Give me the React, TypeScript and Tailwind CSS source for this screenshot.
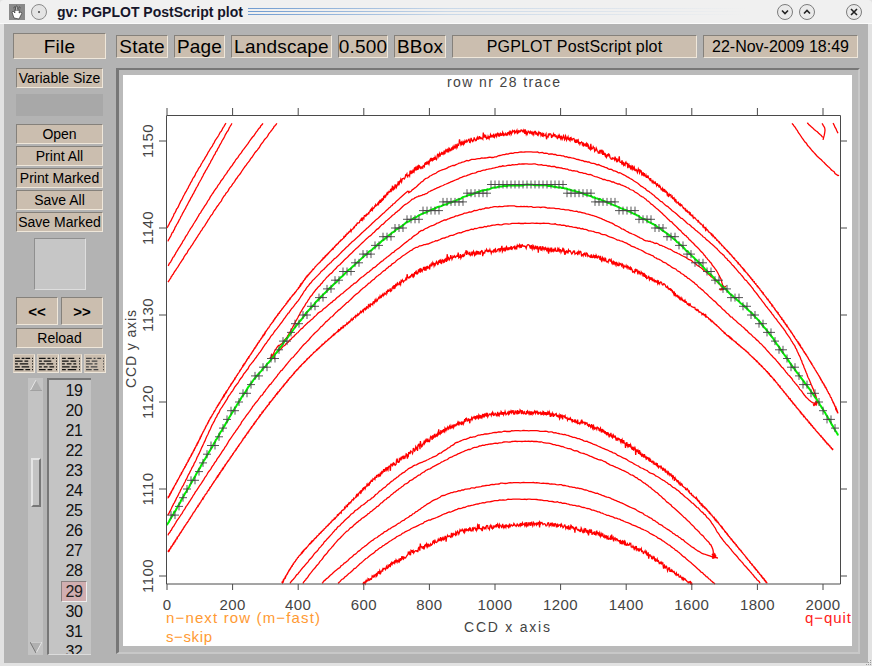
import React from 'react';

type Pt = [number, number];

// all plot coordinates are page pixels, the svg viewBox starts at the white area's corner
const curves: { pts: Pt[]; noise: number }[] = [
  // upper order
  { noise: 1.3, pts: [[168, 498], [193, 452], [217, 407], [267, 330], [297, 290], [320, 262], [400, 182], [427, 163], [463, 143], [497, 135], [520, 132], [547, 135], [573, 140], [600, 152], [640, 172], [675, 200], [717, 240], [750, 277], [777, 312], [803, 350], [827, 390], [838, 413]] },
  { noise: 0, pts: [[168, 515], [195, 462], [222, 407], [267, 342], [297, 302], [320, 273], [400, 198], [410, 192], [427, 178], [447, 168], [470, 160], [493, 157], [513, 153], [533, 152], [557, 155], [580, 160], [607, 168], [640, 185], [707, 240], [737, 270], [767, 307], [793, 343], [808, 377], [817, 400], [813, 405]] },
  { noise: 0, pts: [[272, 357], [277, 347], [287, 337], [320, 285], [400, 209], [427, 193], [460, 178], [493, 168], [527, 164], [560, 168], [600, 178], [640, 195], [690, 240], [710, 262], [720, 277], [723, 288]] },
  { noise: 0, pts: [[272, 357], [285, 345], [320, 312], [400, 247], [433, 225], [487, 208], [533, 207], [567, 210], [600, 218], [640, 238], [660, 245], [690, 260], [713, 278], [723, 288]] },
  { noise: 0, pts: [[168, 535], [210, 470], [258, 400], [320, 328], [400, 258], [433, 242], [483, 227], [533, 223], [573, 227], [613, 238], [660, 260], [693, 282], [727, 313], [760, 343], [787, 373], [807, 398], [817, 405]] },
  { noise: 1.3, pts: [[168, 552], [222, 470], [272, 400], [320, 347], [400, 283], [452, 258], [500, 250], [530, 247], [600, 258], [660, 283], [680, 298], [707, 317], [727, 335], [747, 352], [770, 375], [793, 403], [813, 427], [833, 450]] },
  // wrapped order, top left
  { noise: 0, pts: [[167, 228], [195, 175], [226, 123]] },
  { noise: 0, pts: [[168, 241], [198, 185], [232, 123]] },
  { noise: 0, pts: [[168, 266], [215, 190], [263, 123]] },
  { noise: 0, pts: [[168, 282], [225, 195], [277, 123]] },
  // top right bits
  { noise: 0, pts: [[792, 123], [810, 148], [835, 173], [839, 175]] },
  { noise: 0, pts: [[807, 123], [823, 137]] },
  { noise: 0, pts: [[822, 123], [825, 130], [823, 140]] },
  { noise: 0, pts: [[833, 123], [838, 133]] },
  // lower order
  { noise: 1.3, pts: [[282, 583], [300, 555], [340, 513], [373, 480], [407, 455], [440, 433], [473, 418], [507, 413], [540, 413], [573, 420], [607, 433], [640, 453], [673, 477], [707, 510], [732, 540], [767, 583]] },
  { noise: 0, pts: [[290, 583], [340, 525], [373, 497], [407, 470], [437, 455], [463, 440], [500, 432], [540, 431], [573, 437], [607, 450], [640, 467], [673, 487], [707, 517], [723, 540], [760, 583]] },
  { noise: 0, pts: [[303, 583], [340, 538], [373, 510], [407, 483], [440, 463], [473, 448], [507, 442], [540, 442], [573, 450], [607, 463], [640, 480], [673, 507], [700, 533], [712, 547], [713, 557]] },
  { noise: 0, pts: [[322, 583], [340, 567], [373, 540], [407, 518], [440, 497], [473, 488], [507, 483], [540, 483], [573, 487], [607, 497], [640, 512], [673, 533], [700, 552], [718, 558]] },
  { noise: 0, pts: [[338, 583], [380, 548], [423, 523], [473, 505], [523, 499], [573, 505], [607, 515], [640, 528], [673, 548], [715, 584]] },
  { noise: 1.3, pts: [[363, 584], [407, 555], [457, 533], [490, 527], [540, 524], [573, 528], [607, 537], [640, 550], [673, 572], [692, 584]] },
];

// the small tangles where the inner traces end
const knots: Pt[] = [[272, 357], [723, 288], [816, 404], [713, 556]];

const green: Pt[] = [[167, 525], [240, 400], [273, 357], [320, 298], [400, 227], [457, 200], [493, 188], [523, 185], [557, 187], [593, 197], [640, 217], [675, 240], [723, 287], [760, 322], [793, 367], [817, 400], [838, 435]];

let seed = 1234;
function rnd() {
  seed = (seed * 16807) % 2147483647;
  return seed / 2147483647 - 0.5;
}

function clamp01(v: number) {
  return Math.max(0, Math.min(1, v));
}

function sample(pts: Pt[], density = 1): Pt[] {
  const out: Pt[] = [];
  for (let i = 0; i < pts.length - 1; i++) {
    const p0 = pts[Math.max(0, i - 1)];
    const p1 = pts[i];
    const p2 = pts[i + 1];
    const p3 = pts[Math.min(pts.length - 1, i + 2)];
    const n = Math.max(2, Math.round(Math.hypot(p2[0] - p1[0], p2[1] - p1[1]) * density));
    for (let k = 0; k < n; k++) {
      const t = k / n;
      const f = (a: number, b: number, c: number, d: number) =>
        0.5 * (2 * b + (c - a) * t + (2 * a - 5 * b + 4 * c - d) * t * t + (3 * b - a - 3 * c + d) * t * t * t);
      out.push([f(p0[0], p1[0], p2[0], p3[0]), f(p0[1], p1[1], p2[1], p3[1])]);
    }
  }
  out.push(pts[pts.length - 1]);
  return out;
}

function toPath(pts: Pt[], noise: number) {
  return sample(pts, noise > 0 ? 2 : 0.6)
    .map(([x, y], i) => {
      const amp = noise * clamp01((x - 330) / 70) * clamp01((720 - x) / 80);
      const spike = Math.abs(rnd()) > 0.48 ? 2.6 : 1;
      const base = Math.round(y * 1.5) / 1.5;
      const jy = base + rnd() * (0.4 + amp * 3 * spike);
      return `${i === 0 ? 'M' : 'L'}${x.toFixed(1)} ${jy.toFixed(1)}`;
    })
    .join('');
}

function knotPath([cx, cy]: Pt) {
  let d = `M${cx} ${cy}`;
  for (let i = 0; i < 10; i++) d += `L${(cx + rnd() * 6).toFixed(1)} ${(cy + rnd() * 5).toFixed(1)}`;
  return d;
}

const greenPts = sample(green);
function greenY(x: number) {
  let best = greenPts[0];
  for (const p of greenPts) if (Math.abs(p[0] - x) < Math.abs(best[0] - x)) best = p;
  return best[1];
}

const marks: Pt[] = [];
for (let x = 171; x < 838; x += 4) {
  const row = Math.round((576 - greenY(x)) / 8.7);
  marks.push([x, 576 - row * 8.7]);
}

const xTicks = [0, 200, 400, 600, 800, 1000, 1200, 1400, 1600, 1800, 2000];
const yTicks = [1100, 1110, 1120, 1130, 1140, 1150];
const tx = (v: number) => 167 + (v / 200) * 65.6;
const ty = (v: number) => 576 - (v - 1100) * 8.7;
const plotFont = '"Liberation Sans", sans-serif';

function Plot() {
  return (
    <svg width="729" height="571" viewBox="123 75 729 571" className="block overflow-visible bg-white">
      <g fill="none" stroke="#ff0000" strokeWidth="1.3">
        {curves.map((c, i) => (
          <path key={i} d={toPath(c.pts, c.noise)} />
        ))}
        {knots.map((k, i) => (
          <path key={i} d={knotPath(k)} />
        ))}
      </g>
      <path d={toPath(green, 0)} fill="none" stroke="#00f000" strokeWidth="2" />
      <g stroke="#444444" strokeWidth="0.9">
        {marks.map(([x, y], i) => (
          <path key={i} d={`M${x - 4} ${y}H${x + 4}M${x} ${y - 4}V${y + 4}`} fill="none" />
        ))}
      </g>
      <g stroke="#4a4a4a" strokeWidth="1" fill="none">
        <path d="M166.5 115.5H840.5V584H166.5Z" />
        {xTicks.map((v) => (
          <path key={v} d={`M${tx(v)} 584V590M${tx(v)} 115V108`} />
        ))}
        {yTicks.map((v) => (
          <path key={v} d={`M166 ${ty(v)}H159M841 ${ty(v)}H847`} />
        ))}
      </g>
      <g fill="#444444" fontSize="15" fontFamily={plotFont} letterSpacing="0.4">
        {xTicks.map((v) => (
          <text key={v} x={tx(v)} y="610" textAnchor="middle">
            {v}
          </text>
        ))}
        {yTicks.map((v) => (
          <text key={v} x="153" y={ty(v)} textAnchor="middle" transform={`rotate(-90 153 ${ty(v)})`}>
            {v}
          </text>
        ))}
      </g>
      <g fill="#444444" fontSize="14" fontFamily={plotFont}>
        <text x="447" y="87" textLength="113" lengthAdjust="spacing">
          row nr 28 trace
        </text>
        <text x="464" y="632" textLength="86" lengthAdjust="spacing">
          CCD x axis
        </text>
        <text x="136" y="388" textLength="78" lengthAdjust="spacing" transform="rotate(-90 136 388)">
          CCD y axis
        </text>
      </g>
      <g fontSize="15" fontFamily={plotFont}>
        <text x="166" y="623" fill="#ff9a33" textLength="154" lengthAdjust="spacing">
          n−next row (m−fast)
        </text>
        <text x="166" y="642" fill="#ff9a33" textLength="46" lengthAdjust="spacing">
          s−skip
        </text>
        <text x="805" y="623" fill="#ff2020" textLength="46" lengthAdjust="spacing">
          q−quit
        </text>
      </g>
    </svg>
  );
}

function WinButton({ d }: { d: string }) {
  return (
    <span className="flex size-[16px] items-center justify-center rounded-full border border-[#7c7c7c] bg-[#eaeaea]">
      <svg width="10" height="10" viewBox="0 0 10 10" fill="none" stroke="#222" strokeWidth="1.6">
        <path d={d} />
      </svg>
    </span>
  );
}

function TitleBar() {
  return (
    <div className="flex h-[24px] shrink-0 items-center rounded-t-[4px] border-b border-[#fafafa] bg-[#f0f0f0] pl-[9px]">
      <svg width="16" height="16" viewBox="0 0 16 16">
        <rect width="16" height="16" fill="#8a8a8a" />
        <path d="M5 14L3 8l1-1 2 2-1-6h1l1 4V2h1l1 5 1-4h1l-1 6 2-1 1 1-3 6z" fill="#fff" stroke="#222" strokeWidth="0.6" />
      </svg>
      <span className="ml-[6px] flex size-[16px] items-center justify-center rounded-full border border-[#8a8a8a] bg-[#e4e4e4]">
        <span className="size-[2px] rounded-full bg-[#444]" />
      </span>
      <span className="ml-[10px] text-[14px] leading-none font-bold whitespace-nowrap text-[#16162a]">
        gv: PGPLOT PostScript plot
      </span>
      <div className="ml-[5px] flex h-[9px] w-[500px] flex-col justify-between bg-gradient-to-r from-[#6f9bd0] via-[#c9d8e8] via-40% to-[#f0f0f0]">
        <span className="h-[1px] bg-[#f0f0f0]" />
        <span className="h-[2px] bg-[#f0f0f0]" />
        <span className="h-[2px] bg-[#f0f0f0]" />
        <span className="h-[1px] bg-[#f0f0f0]" />
      </div>
      <div className="ml-auto flex items-center pr-[10px]">
        <WinButton d="M2 3.5L5 6.5L8 3.5" />
        <span className="w-[6px]" />
        <WinButton d="M2 6.5L5 3.5L8 6.5" />
        <span className="w-[31px]" />
        <WinButton d="M2 2L8 8M8 2L2 8" />
      </div>
    </div>
  );
}

const btn =
  'flex items-center justify-center border border-t-[#85817b] border-l-[#85817b] border-r-[#efe7da] border-b-[#efe7da] bg-[#cbbeaf] text-black whitespace-nowrap leading-none';

function TopButton({ w, children }: { w: string; children: React.ReactNode }) {
  return <div className={`${btn} ${w} h-[23px] text-[19px] tracking-[0.2px]`}>{children}</div>;
}

function SideButton({ children, className = '' }: { children: React.ReactNode; className?: string }) {
  return <div className={`${btn} h-[20px] w-[87px] text-[14px] ${className}`}>{children}</div>;
}

const mini = [
  'M1 3.5h5M8 3.5h3M12 3.5h5M19 3.5h1M1 6.5h8M11 6.5h4M19 6.5h1M1 9.5h3M6 9.5h9M19 9.5h1M1 12.5h5M8 12.5h8M19 12.5h1M1 15.5h9M12 15.5h5M19 15.5h1',
  'M1 3.5h7M10 3.5h3M15 3.5h2M19 3.5h1M1 6.5h3M6 6.5h8M19 6.5h1M1 9.5h6M9 9.5h7M19 9.5h1M1 12.5h3M6 12.5h4M12 12.5h5M19 12.5h1M1 15.5h7M10 15.5h5M19 15.5h1',
  'M1 3.5h4M7 3.5h7M19 3.5h1M1 6.5h7M10 6.5h6M19 6.5h1M1 9.5h3M6 9.5h5M13 9.5h3M19 9.5h1M1 12.5h8M11 12.5h6M19 12.5h1M1 15.5h4M7 15.5h9M19 15.5h1',
  'M1 3.5h6M9 3.5h2M13 3.5h4M19 3.5h1M1 6.5h4M7 6.5h6M19 6.5h1M1 9.5h7M10 9.5h3M19 9.5h1M1 12.5h3M6 12.5h7M19 12.5h1M1 15.5h6M9 15.5h5M19 15.5h1',
];

function MiniButton({ d, light }: { d: string; light?: boolean }) {
  return (
    <div className="h-[19px] w-[22px] border border-[#efe7da] border-t-[#d9cfc2] border-l-[#d9cfc2] bg-[#cbbeaf]">
      <svg width="20" height="17" viewBox="0 0 21 18" className="block">
        <path d={d} stroke={light ? '#444' : '#111'} strokeWidth="1.3" fill="none" />
      </svg>
    </div>
  );
}

const pages = [19, 20, 21, 22, 23, 24, 25, 26, 27, 28, 29, 30, 31, 32];

function PageList() {
  return (
    <div className="flex h-[277px] w-[93px] justify-start">
      <div className="ml-[15px] flex w-[15px] flex-col items-center bg-[#c3c3c3] py-[2px]">
        <svg width="12" height="11" viewBox="0 0 12 11">
          <path d="M6 0L12 11H0Z" fill="#b0b0b0" />
          <path d="M6 0L0 11H12" fill="none" stroke="#e6e6e6" />
          <path d="M12 11H0" stroke="#777" />
        </svg>
        <div className="mt-[67px] h-[49px] w-[10px] border-2 border-t-[#e4e4e4] border-l-[#e4e4e4] border-r-[#777] border-b-[#777] bg-[#c3c3c3]" />
        <svg className="mt-auto" width="12" height="11" viewBox="0 0 12 11">
          <path d="M6 11L12 0H0Z" fill="#b0b0b0" />
          <path d="M0 0H12" stroke="#e6e6e6" />
          <path d="M6 11L12 0" stroke="#e6e6e6" />
          <path d="M6 11L0 0" stroke="#777" />
        </svg>
      </div>
      <div className="ml-[4px] h-full w-[44px] overflow-hidden border-t-2 border-l-2 border-b border-t-[#777] border-l-[#777] border-b-[#dcdcdc] bg-[#c4c4c4] pt-[1px] pl-[12px]">
        {pages.map((p) =>
          p === 29 ? (
            <div
              key={p}
              className="flex h-[21px] w-[26px] items-center justify-center border border-t-[#8a8080] border-l-[#8a8080] border-r-[#eee] border-b-[#eee] bg-[#d1aeb0] text-[16px] leading-none tracking-[-0.5px] text-[#222]"
            >
              {p}
            </div>
          ) : (
            <div
              key={p}
              className="flex h-[20px] w-[26px] items-center justify-center text-[16px] leading-none tracking-[-0.5px] text-[#111]"
            >
              {p}
            </div>
          ),
        )}
      </div>
    </div>
  );
}

function Sidebar() {
  return (
    <div className="flex w-[93px] shrink-0 flex-col items-center">
      <div className={`${btn} h-[26px] w-[93px] text-[19px] tracking-[0.2px]`}>File</div>
      <SideButton className="mt-[9px]">Variable Size</SideButton>
      <div className="mt-[6px] h-[22px] w-[87px] bg-[#a8a8a8]" />
      <div className="mt-[8px] flex flex-col gap-[2px]">
        <SideButton>Open</SideButton>
        <SideButton>Print All</SideButton>
        <SideButton>Print Marked</SideButton>
        <SideButton>Save All</SideButton>
        <SideButton>Save Marked</SideButton>
      </div>
      <div className="mt-[6px] h-[52px] w-[52px] border border-t-[#8f8f8f] border-l-[#8f8f8f] border-r-[#dedede] border-b-[#dedede] bg-[#c6c6c6]" />
      <div className="mt-[7px] flex gap-[3px]">
        <div className={`${btn} h-[28px] w-[42px] text-[15px] font-bold`}>&lt;&lt;</div>
        <div className={`${btn} h-[28px] w-[42px] text-[15px] font-bold`}>&gt;&gt;</div>
      </div>
      <SideButton className="mt-[3px]">Reload</SideButton>
      <div className="mt-[6px] flex w-[93px] justify-between">
        {mini.map((d, i) => (
          <MiniButton key={i} d={d} light={i === 3} />
        ))}
      </div>
      <div className="mt-[5px]">
        <PageList />
      </div>
    </div>
  );
}

export default function App() {
  return (
    <div className="relative flex h-[666px] w-[872px] flex-col overflow-hidden bg-[#e2e2e2] [font-family:'Liberation_Sans',Arial,sans-serif]">
      <TitleBar />
      <div className="mx-[4px] mb-[3px] flex flex-1 gap-[10px] bg-[#b3b3b3] pt-[9px] pl-[9px]">
        <Sidebar />
        <div className="flex flex-col pt-[2px]">
          <div className="flex gap-[6px]">
            <TopButton w="w-[52px]">State</TopButton>
            <TopButton w="w-[51px]">Page</TopButton>
            <TopButton w="w-[101px]">Landscape</TopButton>
            <TopButton w="w-[50px]">0.500</TopButton>
            <TopButton w="w-[52px]">BBox</TopButton>
            <div className={`${btn} h-[23px] w-[245px] text-[16px] tracking-[0.15px]`}>PGPLOT PostScript plot</div>
            <div className={`${btn} h-[23px] w-[155px] text-[16px]`}>22-Nov-2009 18:49</div>
          </div>
          <div className="mt-[10px] w-[744px] border-t-[2px] border-l-[3px] border-t-[#777] border-l-[#777] border-r-2 border-b-2 border-r-[#c8c8c8] border-b-[#c8c8c8] bg-[#bababa] px-[4px] pt-[5px] pb-[6px]">
            <Plot />
          </div>
        </div>
      </div>
      {/* resize grip */}
      <svg className="absolute right-0 bottom-0" width="6" height="6" viewBox="0 0 6 6" fill="#9a9a9a">
        <rect x="4" y="0" width="1" height="1" />
        <rect x="2" y="2" width="1" height="1" />
        <rect x="4" y="2" width="1" height="1" />
        <rect x="0" y="4" width="1" height="1" />
        <rect x="2" y="4" width="1" height="1" />
        <rect x="4" y="4" width="1" height="1" />
      </svg>
    </div>
  );
}
